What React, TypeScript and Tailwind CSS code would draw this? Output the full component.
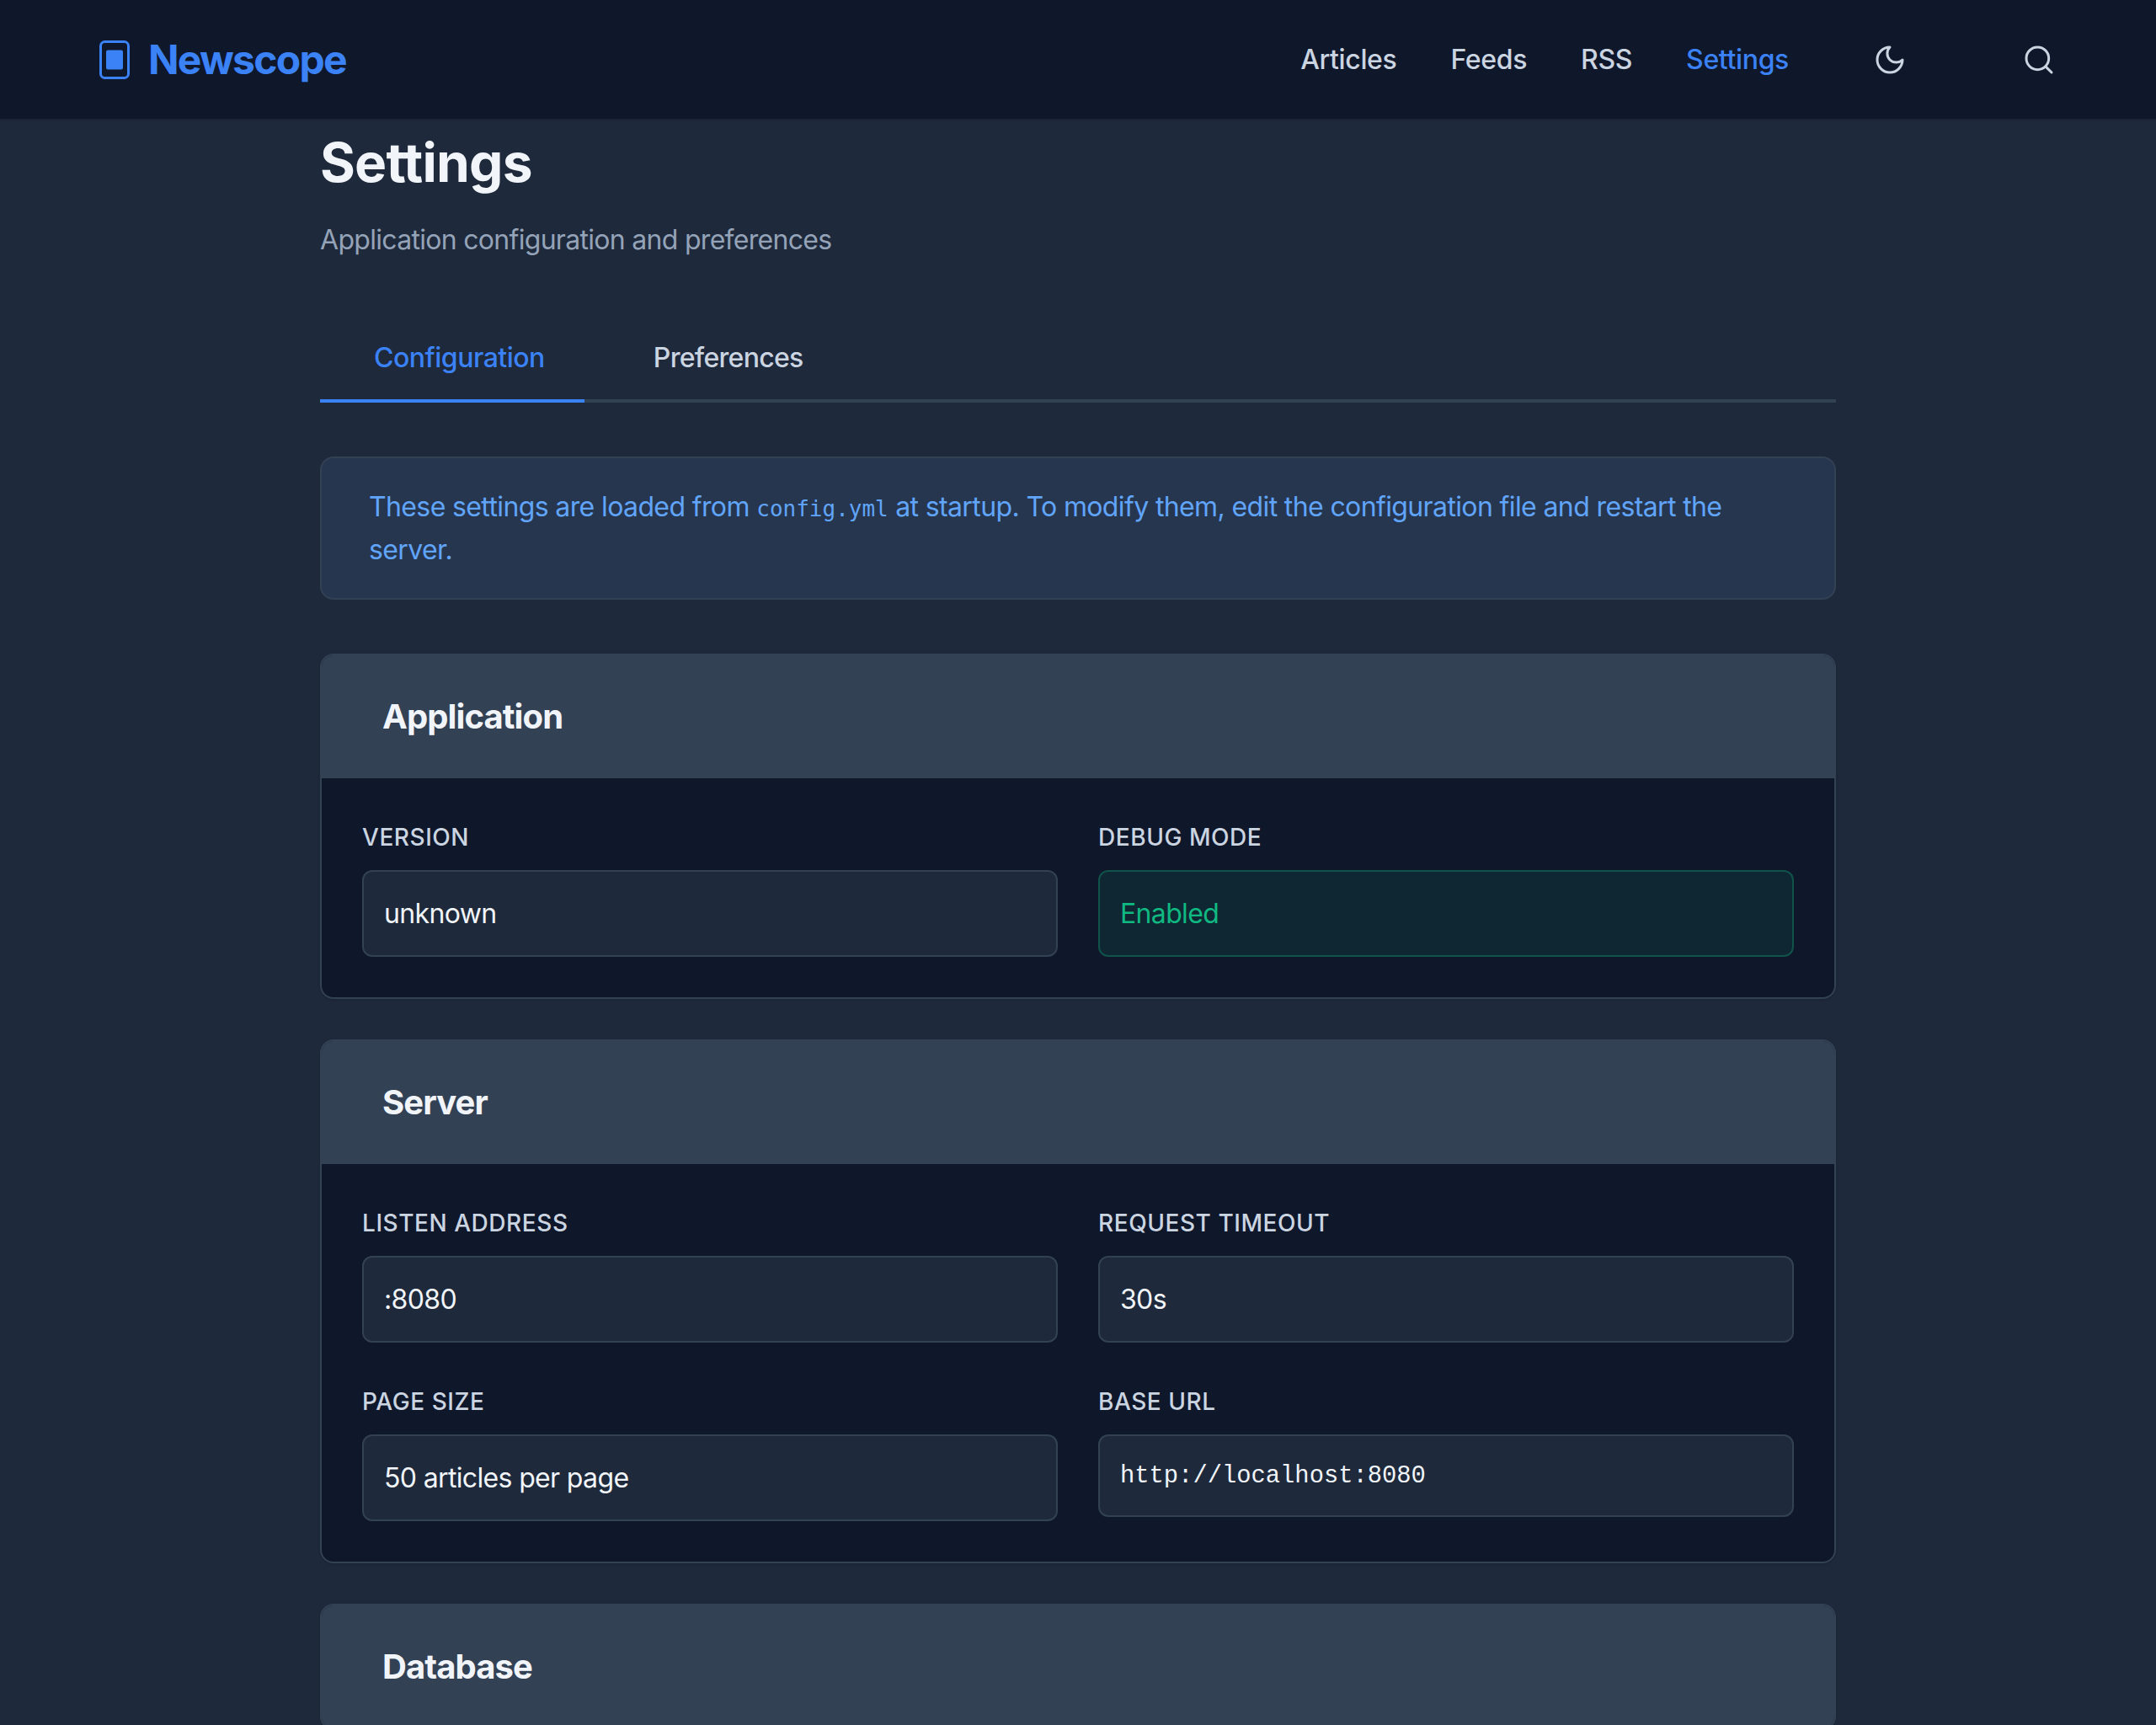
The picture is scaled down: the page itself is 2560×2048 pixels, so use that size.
const navLinks = ['Articles', 'Feeds', 'RSS', 'Settings'];

type Field = { label: string; value: string; status?: boolean; mono?: boolean };

const sections: { title: string; fields: Field[] }[] = [
  {
    title: 'Application',
    fields: [
      { label: 'Version', value: 'unknown' },
      { label: 'Debug Mode', value: 'Enabled', status: true },
    ],
  },
  {
    title: 'Server',
    fields: [
      { label: 'Listen Address', value: ':8080' },
      { label: 'Request Timeout', value: '30s' },
      { label: 'Page Size', value: '50 articles per page' },
      { label: 'Base URL', value: 'http://localhost:8080', mono: true },
    ],
  },
  {
    title: 'Database',
    fields: [],
  },
];

const FieldBox = ({ field }: { field: Field }) => {
  let box = 'border-[#334155] bg-[#1e293b] text-[#f1f5f9] text-[32px] leading-[51px] tracking-[-0.65px] py-6';
  if (field.status) box = 'border-[#10b981]/30 bg-[#10b981]/10 text-[#10b981] text-[32px] leading-[51px] tracking-[-0.65px] py-6';
  if (field.mono) box = 'border-[#334155] bg-[#1e293b] text-[#f1f5f9] text-[28.8px] leading-[46px] font-["Liberation_Mono",monospace] pt-[25px] pb-[23px]';

  return (
    <div className="flex flex-col items-stretch self-start">
      <label className="mb-4 text-[28px] leading-[45px] font-medium tracking-[0.55px] text-[#cbd5e1] uppercase">
        {field.label}
      </label>
      <div className={`rounded-xl border-2 px-6 ${box}`}>{field.value}</div>
    </div>
  );
};

export default function App() {
  return (
    <div className="h-screen overflow-hidden bg-[#1e293b] font-['Inter',sans-serif]">
      <header className="relative z-10 flex h-[141px] items-center justify-between bg-[#0f172a] pr-[119px] pl-[118px] shadow-sm">
        <a className="flex items-center gap-[22px] text-[48px] font-bold tracking-[-1.75px] text-[#3b82f6]">
          <svg width="36" height="46" viewBox="0 0 36 46" fill="none">
            <rect x="1.5" y="1.5" width="33" height="43" rx="5" stroke="#3b82f6" strokeWidth="3" />
            <rect x="8" y="11.5" width="20" height="23" rx="2" fill="#3b82f6" />
          </svg>
          Newscope
        </a>
        <nav className="flex items-center">
          <div className="flex gap-16">
            {navLinks.map((link) => (
              <a
                key={link}
                className={`text-[32px] font-medium tracking-[-0.35px] ${link === 'Settings' ? 'text-[#3b82f6]' : 'text-[#cbd5e1]'}`}
              >
                {link}
              </a>
            ))}
          </div>
          <button className="ml-[100px] text-[#cbd5e1]">
            <svg width="40" height="40" viewBox="0 0 24 24" fill="none" stroke="currentColor" strokeWidth="1.8" strokeLinecap="round" strokeLinejoin="round" className="block">
              <path d="M12 3a6 6 0 0 0 9 9 9 9 0 1 1-9-9Z" />
            </svg>
          </button>
          <button className="ml-[137px] text-[#cbd5e1]">
            <svg width="40" height="40" viewBox="0 0 24 24" fill="none" stroke="currentColor" strokeWidth="1.8" strokeLinecap="round" strokeLinejoin="round" className="block">
              <circle cx="11" cy="11" r="8" />
              <path d="m21 21-4.3-4.3" />
            </svg>
          </button>
        </nav>
      </header>

      <main className="mx-auto w-[1800px] pt-[13px]">
        <h1 className="text-[64px] leading-[77px] font-bold tracking-[-0.8px] text-[#f1f5f9]">Settings</h1>
        <p className="mt-[28px] text-[32px] leading-[51px] tracking-[-0.7px] text-[#94a3b8]">
          Application configuration and preferences
        </p>

        <div className="mt-[65px] mb-16 flex border-b-4 border-[#334155]">
          <button className="-mb-1 border-b-4 border-[#3b82f6] pt-6 pr-[47px] pb-6 pl-16 text-[32px] leading-[51px] font-medium tracking-[-0.5px] text-[#3b82f6]">
            Configuration
          </button>
          <button className="ml-[18px] pt-6 pb-6 pl-16 text-[32px] leading-[51px] font-medium tracking-[-0.7px] text-[#cbd5e1]">
            Preferences
          </button>
        </div>

        <div className="mb-16 rounded-2xl border-2 border-[#334155] bg-[#27364f] px-14 py-8 text-[32px] leading-[51.2px] tracking-[-0.62px] text-[#60a5fa]">
          These settings are loaded from{' '}
          <code className="font-['DejaVu_Sans_Mono',monospace] text-[26px] leading-none tracking-normal">config.yml</code> at startup. To modify them, edit the configuration file and restart the server.
        </div>

        <div className="flex flex-col gap-12">
          {sections.map((section) => (
            <section key={section.title} className="overflow-hidden rounded-2xl border-2 border-[#334155] bg-[#0f172a] shadow-sm">
              <div className="flex h-[146px] items-center bg-[#334155] px-[72px]">
                <h3 className="text-[40px] font-bold tracking-[-0.9px] text-[#f1f5f9]">{section.title}</h3>
              </div>
              {section.fields.length > 0 && (
                <div className="grid grid-cols-2 gap-12 p-12">
                  {section.fields.map((field) => (
                    <FieldBox key={field.label} field={field} />
                  ))}
                </div>
              )}
            </section>
          ))}
        </div>
      </main>
    </div>
  );
}
